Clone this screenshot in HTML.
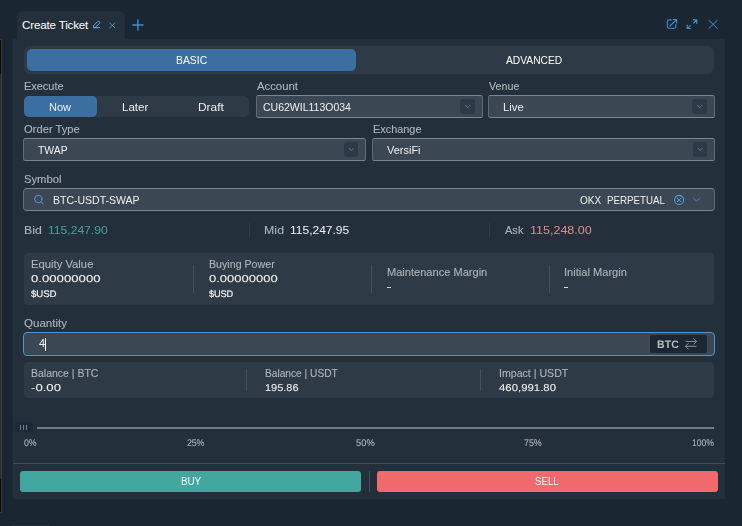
<!DOCTYPE html>
<html lang="en">
<head>
<meta charset="utf-8">
<title>Create Ticket</title>
<style>
*{box-sizing:border-box;margin:0;padding:0}
html,body{width:742px;height:526px;overflow:hidden;background:#1a2632;font-family:"Liberation Sans",sans-serif;color:#eef0f2}
#root{position:absolute;left:0;top:0;width:742px;height:526px;overflow:hidden;will-change:transform}
.a{position:absolute}
.t{position:absolute;white-space:pre;line-height:14px;transform-origin:0 0}
.box{position:absolute;background:#2e3a45;border-radius:4px}
.sel{position:absolute;background:#3b4854;border:1px solid #788695;border-left-color:#5e6b78;border-right-color:#5e6b78;border-radius:2.5px}
.chev{position:absolute;width:15px;height:15px;background:#2d3945;border-radius:3px}
.vs{position:absolute;width:1px;background:#44505c}
.vd{position:absolute;width:1px;background:#303c48}
svg{position:absolute;overflow:visible}
</style>
</head>
<body>
<div class="a" style="left:17px;top:11px;width:108px;height:30px;background:#232f3a;border-radius:6px 6px 0 0"></div>
<div class="t" style="left:22.07px;top:18px;font-size:11.6px;color:#ffffff;letter-spacing:-0.17px">Create Ticket</div>
<div id="root">
<div class="a" style="left:0px;top:39px;width:1px;height:474px;background:#272c32;"></div>
<div class="a" style="left:1px;top:39px;width:1px;height:474px;background:#3e4144;"></div>
<div class="a" style="left:0px;top:39px;width:2px;height:1px;background:#3e3a36;"></div>
<div class="a" style="left:0px;top:40px;width:1px;height:34px;background:#0a0a0b;"></div>
<div class="a" style="left:1px;top:40px;width:1px;height:34px;background:#3c3630;"></div>
<div class="a" style="left:0px;top:479px;width:1px;height:33px;background:#0a0a0b;"></div>
<div class="a" style="left:1px;top:479px;width:1px;height:34px;background:#3c3630;"></div>
<div class="a" style="left:0px;top:512px;width:2px;height:1px;background:#3c3630;"></div>
<div class="a" style="left:12px;top:525px;width:37px;height:1px;background:#222e39;"></div>
<div class="a" style="left:13px;top:39px;width:712px;height:460px;background:#232f3a;"></div>
<div class="a" style="left:24px;top:46px;width:690px;height:28px;background:#2e3a45;border-radius:6px"></div>
<div class="a" style="left:27px;top:49px;width:329px;height:22px;background:#3b6fa2;border-radius:5px"></div>
<div class="a" style="left:24px;top:96px;width:225px;height:21px;background:#2e3a45;border-radius:5px"></div>
<div class="a" style="left:24px;top:96px;width:73px;height:21px;background:#3b6fa2;border-radius:5px"></div>
<div class="sel" style="left:256px;top:95px;width:227px;height:23px"></div>
<div class="chev" style="left:460px;top:99px;width:15px"></div>
<svg style="left:0;top:0" width="742" height="526"><path d="M465.50 105.20 L467.70 107.60 L469.90 105.20" fill="none" stroke="#4a8fc6" stroke-width="0.85" stroke-linecap="round" stroke-linejoin="round"/></svg>
<div class="sel" style="left:488px;top:95px;width:227px;height:23px"></div>
<div class="chev" style="left:692px;top:99px;width:15px"></div>
<svg style="left:0;top:0" width="742" height="526"><path d="M697.50 105.20 L699.70 107.60 L701.90 105.20" fill="none" stroke="#4a8fc6" stroke-width="0.85" stroke-linecap="round" stroke-linejoin="round"/></svg>
<div class="sel" style="left:23px;top:138px;width:343px;height:23px"></div>
<div class="chev" style="left:344px;top:142px;width:14px"></div>
<svg style="left:0;top:0" width="742" height="526"><path d="M349.00 148.20 L351.20 150.60 L353.40 148.20" fill="none" stroke="#4a8fc6" stroke-width="0.85" stroke-linecap="round" stroke-linejoin="round"/></svg>
<div class="sel" style="left:372px;top:138px;width:343px;height:23px"></div>
<div class="chev" style="left:693px;top:142px;width:14px"></div>
<svg style="left:0;top:0" width="742" height="526"><path d="M698.00 148.20 L700.20 150.60 L702.40 148.20" fill="none" stroke="#4a8fc6" stroke-width="0.85" stroke-linecap="round" stroke-linejoin="round"/></svg>
<div class="sel" style="left:23px;top:188px;width:692px;height:23px;border-color:#788695;border-left-color:#5e6b78;border-right-color:#5e6b78;border-radius:4px"></div>
<div class="a" style="left:24px;top:253px;width:690px;height:52px;background:#2e3a45;border-radius:4px"></div>
<div class="vs" style="left:193px;top:265px;height:28px"></div>
<div class="vs" style="left:371px;top:265px;height:28px"></div>
<div class="vs" style="left:549px;top:265px;height:28px"></div>
<div class="vd" style="left:249px;top:223px;height:14px"></div>
<div class="vd" style="left:489px;top:223px;height:14px"></div>
<div class="sel" style="left:23px;top:332px;width:692px;height:24px;border-color:#4a95d6;border-radius:4px"></div>
<div class="a" style="left:650px;top:335px;width:57px;height:18px;background:#1c2733;border-radius:2px"></div>
<div class="a" style="left:45px;top:338px;width:1px;height:13px;background:#ffffff;"></div>
<div class="a" style="left:24px;top:362px;width:690px;height:36px;background:#2e3a45;border-radius:4px"></div>
<div class="vs" style="left:246px;top:369px;height:22px"></div>
<div class="vs" style="left:480px;top:369px;height:22px"></div>
<div class="a" style="left:37px;top:427px;width:677px;height:2px;background:#737c8a;"></div>
<div class="a" style="left:15px;top:422px;width:18px;height:10px;background:#1d2935;border-radius:3px"></div>
<div class="a" style="left:20px;top:425px;width:1px;height:4.5px;background:#767e90;"></div>
<div class="a" style="left:23px;top:425px;width:1px;height:4.5px;background:#767e90;"></div>
<div class="a" style="left:26.3px;top:425px;width:1px;height:4.5px;background:#767e90;"></div>
<div class="a" style="left:13px;top:463px;width:712px;height:1px;background:#404d5b;"></div>
<div class="a" style="left:20px;top:471px;width:341px;height:21px;background:#41a79f;border-radius:3px"></div>
<div class="a" style="left:369px;top:471px;width:1px;height:21px;background:#3f4c5a;"></div>
<div class="a" style="left:377px;top:471px;width:341px;height:21px;background:#f0696c;border-radius:3px"></div>
<div class="a" style="left:387px;top:287px;width:4px;height:1px;background:#d5d9dd;"></div>
<div class="a" style="left:564px;top:287px;width:4px;height:1px;background:#d5d9dd;"></div>
<svg style="left:0;top:0" width="742" height="526" viewBox="0 0 742 526"><path d="M93.5 27.2 L93.7 25.5 L97.5 21.7 a1.3 1.3 0 0 1 1.85 1.85 L95.5 27.2 Z" fill="none" stroke="#5fb0ea" stroke-width="1.0" stroke-linecap="round" stroke-linejoin="round"/><path d="M93.2 27.7 H100" fill="none" stroke="#5fb0ea" stroke-width="1"/><path d="M109.6 22.8 L115 28 M115 22.8 L109.6 28" fill="none" stroke="#4a93cf" stroke-width="1.0" stroke-linecap="round" stroke-linejoin="round"/><path d="M132.3 25 H143.5 M137.9 19.4 V30.6" fill="none" stroke="#468ec9" stroke-width="1.4"/><path d="M671.2 19.9 H669.2 a1.9 1.9 0 0 0 -1.9 1.9 V26.4 a1.9 1.9 0 0 0 1.9 1.9 H674 a1.9 1.9 0 0 0 1.9 -1.9 V24.6 M669.9 26 L676.5 19.6 M673.2 19.5 H676.7 V23" fill="none" stroke="#4690cc" stroke-width="1.1" stroke-linecap="round" stroke-linejoin="round"/><path d="M693.3 19.9 H696.8 V23.4 M696.6 20.1 L693.6 23.1 M687.2 25 V28.5 H690.7 M687.4 28.3 L690.4 25.3" fill="none" stroke="#4690cc" stroke-width="1.1" stroke-linecap="round" stroke-linejoin="round"/><path d="M708.9 20.3 L717.3 28.4 M717.3 20.3 L708.9 28.4" fill="none" stroke="#4690cc" stroke-width="1.0" stroke-linecap="round" stroke-linejoin="round"/><circle cx="38.3" cy="199" r="3.7" fill="none" stroke="#4e9cd8" stroke-width="1.0" stroke-linecap="round" stroke-linejoin="round"/><path d="M41.1 201.8 L43.2 204" fill="none" stroke="#4e9cd8" stroke-width="1.0" stroke-linecap="round" stroke-linejoin="round"/><circle cx="679.1" cy="199.9" r="4.5" fill="none" stroke="#4e9cd8" stroke-width="1.1" stroke-linecap="round" stroke-linejoin="round"/><path d="M677.3 198.1 L680.9 201.7 M680.9 198.1 L677.3 201.7" fill="none" stroke="#4e9cd8" stroke-width="1.0" stroke-linecap="round" stroke-linejoin="round"/><path d="M693.6 198.4 L696.6 201 L699.7 198.4" fill="none" stroke="#4a8fc6" stroke-width="0.9" stroke-linecap="round" stroke-linejoin="round"/><path d="M686 341.4 H696.3 M693.7 338.6 L696.5 341.4 L693.7 344.2 M696 346.3 H685.7 M688.3 343.5 L685.5 346.3 L688.3 349.1" fill="none" stroke="#8792a0" stroke-width="1.0" stroke-linecap="round" stroke-linejoin="round"/></svg>
<div class="t" style="left:176.24px;top:53px;font-size:11px;color:#ffffff;transform:scaleX(0.9453)">BASIC</div>
<div class="t" style="left:505.69px;top:53px;font-size:11px;color:#ffffff;transform:scaleX(0.9315)">ADVANCED</div>
<div class="t" style="left:24.13px;top:79px;font-size:11.2px;color:#adb5bd;-webkit-text-stroke:0.12px #adb5bd;transform:scaleX(0.9791)">Execute</div>
<div class="t" style="left:257.3px;top:79px;font-size:11.2px;color:#adb5bd;-webkit-text-stroke:0.12px #adb5bd;transform:scaleX(1.0103)">Account</div>
<div class="t" style="left:489.49px;top:79px;font-size:11.2px;color:#adb5bd;-webkit-text-stroke:0.12px #adb5bd;transform:scaleX(0.9581)">Venue</div>
<div class="t" style="left:48.98px;top:100px;font-size:11px;color:#eef0f2;letter-spacing:-0.05px;transform:scaleX(1.0051)">Now</div>
<div class="t" style="left:121.53px;top:100px;font-size:11px;color:#eef0f2;transform:scaleX(1.049)">Later</div>
<div class="t" style="left:197.65px;top:100px;font-size:11px;color:#eef0f2;transform:scaleX(1.0854)">Draft</div>
<div class="t" style="left:263.14px;top:100px;font-size:11px;color:#eef0f2;transform:scaleX(0.9543)">CU62WIL113O034</div>
<div class="t" style="left:502.65px;top:100px;font-size:11px;color:#eef0f2;transform:scaleX(1.0329)">Live</div>
<div class="t" style="left:24.42px;top:122px;font-size:11.2px;color:#adb5bd;-webkit-text-stroke:0.12px #adb5bd;transform:scaleX(1.0009)">Order Type</div>
<div class="t" style="left:372.73px;top:122px;font-size:11.2px;color:#adb5bd;-webkit-text-stroke:0.12px #adb5bd;transform:scaleX(0.9745)">Exchange</div>
<div class="t" style="left:38.28px;top:143px;font-size:11px;color:#eef0f2;transform:scaleX(0.9458)">TWAP</div>
<div class="t" style="left:386.95px;top:143px;font-size:11px;color:#eef0f2;transform:scaleX(0.9982)">VersiFi</div>
<div class="t" style="left:24.17px;top:172px;font-size:11.2px;color:#adb5bd;-webkit-text-stroke:0.12px #adb5bd;transform:scaleX(1.0047)">Symbol</div>
<div class="t" style="left:53.03px;top:193px;font-size:11px;color:#eef0f2;transform:scaleX(0.9553)">BTC-USDT-SWAP</div>
<div class="t" style="left:579.7px;top:193px;font-size:11px;color:#eef0f2;transform:scaleX(0.9106)">OKX</div>
<div class="t" style="left:607.41px;top:193px;font-size:11px;color:#eef0f2;transform:scaleX(0.8844)">PERPETUAL</div>
<div class="t" style="left:23.84px;top:223px;font-size:11.8px;color:#adb5bd;-webkit-text-stroke:0.12px #adb5bd;transform:scaleX(1.0425)">Bid</div>
<div class="t" style="left:47.83px;top:223px;font-size:11.4px;color:#3fa79a;transform:scaleX(1.0621)">115,247.90</div>
<div class="t" style="left:263.93px;top:223px;font-size:11.8px;color:#adb5bd;letter-spacing:0.09px;-webkit-text-stroke:0.12px #adb5bd;transform:scaleX(1.0433)">Mid</div>
<div class="t" style="left:290.34px;top:223px;font-size:11.4px;color:#eef0f2;transform:scaleX(1.0535)">115,247.95</div>
<div class="t" style="left:504.7px;top:223px;font-size:11.8px;color:#adb5bd;letter-spacing:0.07px;-webkit-text-stroke:0.12px #adb5bd;transform:scaleX(0.9285)">Ask</div>
<div class="t" style="left:529.84px;top:223px;font-size:11.4px;color:#e48a8e;transform:scaleX(1.0984)">115,248.00</div>
<div class="t" style="left:30.71px;top:257px;font-size:11.2px;color:#adb5bd;-webkit-text-stroke:0.12px #adb5bd;transform:scaleX(1.0067)">Equity Value</div>
<div class="t" style="left:30.64px;top:273px;font-size:9.9px;color:#eef0f2;-webkit-text-stroke:0.1px #eef0f2;text-rendering:geometricPrecision;transform:scaleX(1.3324)">0.00000000</div>
<div class="t" style="left:30.83px;top:288px;font-size:9.5px;color:#eef0f2;letter-spacing:-0.08px;-webkit-text-stroke:0.2px #eef0f2;text-rendering:geometricPrecision;transform:scaleX(1.0159)">$USD</div>
<div class="t" style="left:208.75px;top:257px;font-size:11.2px;color:#adb5bd;-webkit-text-stroke:0.12px #adb5bd;transform:scaleX(0.9519)">Buying Power</div>
<div class="t" style="left:208.66px;top:273px;font-size:9.9px;color:#eef0f2;-webkit-text-stroke:0.1px #eef0f2;text-rendering:geometricPrecision;transform:scaleX(1.3151)">0.00000000</div>
<div class="t" style="left:208.83px;top:288px;font-size:9.5px;color:#eef0f2;letter-spacing:-0.1px;-webkit-text-stroke:0.2px #eef0f2;text-rendering:geometricPrecision;transform:scaleX(0.9679)">$USD</div>
<div class="t" style="left:386.72px;top:265px;font-size:11.2px;color:#adb5bd;-webkit-text-stroke:0.12px #adb5bd;transform:scaleX(0.9892)">Maintenance Margin</div>
<div class="t" style="left:563.61px;top:265px;font-size:11.2px;color:#adb5bd;-webkit-text-stroke:0.12px #adb5bd;transform:scaleX(0.9919)">Initial Margin</div>
<div class="t" style="left:24.41px;top:316px;font-size:11.2px;color:#adb5bd;-webkit-text-stroke:0.12px #adb5bd;transform:scaleX(1.031)">Quantity</div>
<div class="t" style="left:39.02px;top:336px;font-size:11px;color:#eef0f2">4</div>
<div class="t" style="left:30.76px;top:366px;font-size:11.2px;color:#adb5bd;-webkit-text-stroke:0.12px #adb5bd;transform:scaleX(0.937)">Balance | BTC</div>
<div class="t" style="left:30.5px;top:382px;font-size:9.9px;color:#eef0f2;-webkit-text-stroke:0.08px #eef0f2;text-rendering:geometricPrecision;transform:scaleX(1.3332)">-0.00</div>
<div class="t" style="left:264.99px;top:366px;font-size:11.2px;color:#adb5bd;-webkit-text-stroke:0.12px #adb5bd;transform:scaleX(0.9098)">Balance | USDT</div>
<div class="t" style="left:264.51px;top:382px;font-size:9.9px;color:#eef0f2;-webkit-text-stroke:0.08px #eef0f2;text-rendering:geometricPrecision;transform:scaleX(1.1083)">195.86</div>
<div class="t" style="left:498.7px;top:366px;font-size:11.2px;color:#adb5bd;-webkit-text-stroke:0.12px #adb5bd;transform:scaleX(0.9477)">Impact | USDT</div>
<div class="t" style="left:498.76px;top:382px;font-size:9.9px;color:#eef0f2;-webkit-text-stroke:0.08px #eef0f2;text-rendering:geometricPrecision;transform:scaleX(1.1528)">460,991.80</div>
<div class="t" style="left:24.17px;top:437px;font-size:9.6px;color:#adb5bd;letter-spacing:-0.24px;-webkit-text-stroke:0.1px #adb5bd;text-rendering:geometricPrecision;transform:scaleX(0.9093)">0%</div>
<div class="t" style="left:187.45px;top:437px;font-size:9.6px;color:#adb5bd;letter-spacing:-0.12px;-webkit-text-stroke:0.1px #adb5bd;text-rendering:geometricPrecision;transform:scaleX(0.9213)">25%</div>
<div class="t" style="left:355.7px;top:437px;font-size:9.6px;color:#adb5bd;letter-spacing:0.09px;-webkit-text-stroke:0.1px #adb5bd;text-rendering:geometricPrecision;transform:scaleX(0.9662)">50%</div>
<div class="t" style="left:524.06px;top:437px;font-size:9.6px;color:#adb5bd;letter-spacing:-0.07px;-webkit-text-stroke:0.1px #adb5bd;text-rendering:geometricPrecision;transform:scaleX(0.931)">75%</div>
<div class="t" style="left:692.13px;top:437px;font-size:9.6px;color:#adb5bd;-webkit-text-stroke:0.1px #adb5bd;text-rendering:geometricPrecision;transform:scaleX(0.8936)">100%</div>
<div class="t" style="left:180.69px;top:474px;font-size:11px;color:#ffffff;letter-spacing:-0.05px;transform:scaleX(0.8946)">BUY</div>
<div class="t" style="left:535.37px;top:474px;font-size:11px;color:#ffffff;letter-spacing:-0.05px;transform:scaleX(0.8858)">SELL</div>
<div class="t" style="left:657.21px;top:338px;font-size:10.8px;color:#b9bdc1;letter-spacing:0.05px;font-weight:bold;text-rendering:geometricPrecision;transform:scaleX(0.9764)">BTC</div>
</div>
</body>
</html>
